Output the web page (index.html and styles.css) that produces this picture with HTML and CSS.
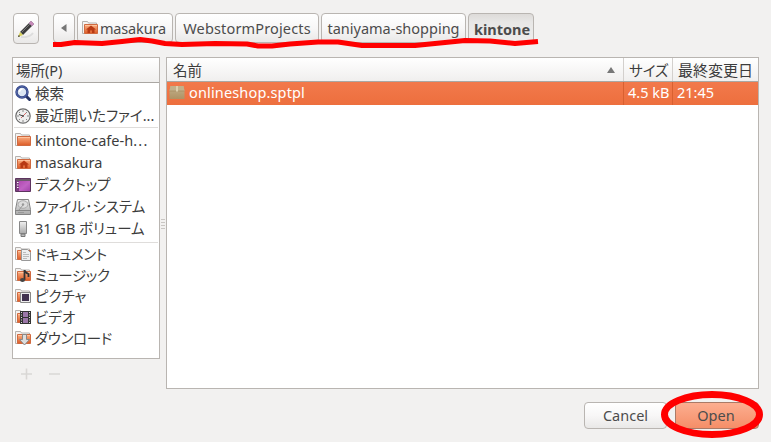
FILE: index.html
```html
<!DOCTYPE html>
<html lang="ja">
<head>
<meta charset="utf-8">
<title>Open</title>
<link rel="stylesheet" href="styles.css">
</head>
<body>
<svg class="defs" width="0" height="0" aria-hidden="true">
  <defs>
    <linearGradient id="orange" x1="0" y1="0" x2="0" y2="1"><stop offset="0" stop-color="#fbb184"/><stop offset="1" stop-color="#dc5b26"/></linearGradient>
    <linearGradient id="silver" x1="0" y1="0" x2="0" y2="1"><stop offset="0" stop-color="#f1f1f1"/><stop offset="1" stop-color="#aaa"/></linearGradient>
    <linearGradient id="violet" x1="0" y1="0" x2="1" y2="1"><stop offset="0" stop-color="#a83aa8"/><stop offset=".6" stop-color="#c063c4"/><stop offset="1" stop-color="#a040a8"/></linearGradient>
    <linearGradient id="box" x1="0" y1="0" x2="0" y2="1"><stop offset="0" stop-color="#c4b28c"/><stop offset="1" stop-color="#ae9264"/></linearGradient>
    <symbol id="folder" viewBox="0 0 16 16">
      <path d="M.5 13.500V1.500h5l1 1.500h8v10.500z" fill="#f5f3f1" stroke="#b5b1ae"/>
      <path d="M2.500 4.500h13v9h-13z" fill="url(#orange)" stroke="#d06a40"/>
      <path d="M3 5.500h12" stroke="#ffc39d"/>
    </symbol>
    <symbol id="home" viewBox="0 0 16 16"><use href="#folder"/><path d="M9 5.500l5 4h-1.500v3.500h-2.500v-2.500H8V13H5.500V9.500H4z" fill="#b83a14"/></symbol>
  </defs>
</svg>
<main class="dialog">
  <header class="pathbar">
    <button class="btn edit" aria-label="edit">
      <svg width="18" height="18" viewBox="0 0 18 18"><path d="M4 17q8 1 12-4" stroke="#ddd" stroke-width="2" fill="none"/><path d="M3 12l9-9 3 3-9 9z" fill="#3c3c3c"/><path d="M4.500 12.500l9-9" stroke="#777"/><path d="M12 3l2-2 3 3-2 2z" fill="#c98bbb" stroke="#9b6e94" stroke-width=".6"/><path d="M3 12l-2 5 5-2z" fill="#d8d25a"/><path d="M1 17l.8-2 1.300 1.200z" fill="#222"/></svg>
    </button>
    <nav class="crumbs">
      <button class="btn back" aria-label="back"><svg width="6" height="8" viewBox="0 0 6 8"><path d="M5.500 0v8L0 4z" fill="#777"/></svg></button>
      <button class="btn c1"><svg width="16" height="16"><use href="#home"/></svg><span class="t-masakura">masakura</span></button>
      <button class="btn c2"><span class="t-web">WebstormProjects</span></button>
      <button class="btn c3"><span class="t-tani">taniyama-shopping</span></button>
      <button class="btn c4"><span class="t-kin">kintone</span></button>
    </nav>
    <svg class="mark line" width="490" height="16" viewBox="52 34 490 16"><path d="M53 44.500h8L75 42.500 102 43.500 122 41.500 140 39.500 152 41 165 43.500 182 44.500 215 43.500 247 44 258 46 272 46 290 44 318 42 338 42 362 45.500 415 45.500 440 43 465 40.500 490 41 515 43.500 538 41.500" fill="none" stroke="red" stroke-width="5" stroke-linejoin="round"/></svg>
  </header>

  <section class="panes">
    <aside class="side">
      <div class="places">
        <div class="head"><span class="t-place">場所(P)</span></div>
        <ul>
          <li class="r23"><svg width="16" height="16" viewBox="0 0 16 16"><path d="M11 11l3.500 3.500" stroke="#263465" stroke-width="3" stroke-linecap="round"/><circle cx="7" cy="7" r="5.500" fill="#dce6f3" stroke="#2f4186" stroke-width="2.400"/><circle cx="7" cy="7" r="5.500" fill="none" stroke="#6f84bd" stroke-width=".6"/><path d="M4.500 7a3 3 0 0 1 3-3" stroke="#fff" stroke-width="1.500" fill="none"/></svg><span class="p1">検索</span></li>
          <li class="r22"><svg width="16" height="16" viewBox="0 0 16 16"><circle cx="8" cy="8" r="7.200" fill="#eee" stroke="#6b6b6b" stroke-width="1.200"/><path d="M8 2v2M8 12v2M2 8h2M12 8h2M4 4l1 1M12 4l-1 1M4 12l1-1M12 12l-1-1" stroke="#888"/><path d="M8 8L4 6.500" stroke="#444"/><path d="M6 10l5-5" stroke="#d66"/><circle cx="8" cy="8" r="1" fill="#555"/></svg><span class="p2">最近開いたファイ...</span></li>
          <li class="sep"></li>
          <li class="r23"><svg width="16" height="16"><use href="#folder"/></svg><span class="p3">kintone-cafe-h<span class="dots">...</span></span></li>
          <li class="r22"><svg width="16" height="16"><use href="#home"/></svg><span class="t-masakura">masakura</span></li>
          <li class="r22"><svg width="16" height="16" viewBox="0 0 16 16"><path d="M.5 1.500h15v13H.5z" fill="url(#violet)" stroke="#5d345f"/><path d="M1 2h14v2H1z" fill="#6d5a6c"/><path d="M1 4h3v10H1z" fill="#7d3f80"/><path d="M2 5.500h1.500M2 8h1.500M2 10.500h1.500" stroke="#fff" stroke-width="1.200"/></svg><span class="p5">デスクトップ</span></li>
          <li class="r22"><svg width="16" height="16" viewBox="0 0 16 16"><path d="M2.500.5h11l2 10v5H.5v-5z" fill="url(#silver)" stroke="#858585"/><ellipse cx="8" cy="5.500" rx="5" ry="3.800" fill="#ddd" stroke="#aaa"/><circle cx="8" cy="5.500" r="1.200" fill="#999"/><path d="M8 6l-4 5" stroke="#999"/><path d="M1 11.500h14" stroke="#888"/><path d="M3 13.500h6" stroke="#999"/></svg><span class="p6">ファイル･システム</span></li>
          <li class="r22"><svg width="16" height="16" viewBox="0 0 16 16"><path d="M4.500.5h7v12h-7z" fill="url(#silver)" stroke="#888"/><path d="M6 13h4v2.500H6z" fill="#bbb" stroke="#777"/></svg><span class="p7">31 GB ボリューム</span></li>
          <li class="sep s2"></li>
          <li class="r21"><svg width="16" height="16" viewBox="0 0 16 16"><use href="#folder"/><path d="M6.500 3.500h6l3 3v8h-9z" fill="#eee" stroke="#999"/><path d="M8 6.500h3M8 8.500h6M8 10.500h6M8 12.500h4" stroke="#bbb"/></svg><span class="p8">ドキュメント</span></li>
          <li class="r21"><svg width="16" height="16" viewBox="0 0 16 16"><use href="#folder"/><path d="M9.500 13V3q0 2 4 4v3" fill="none" stroke="#333" stroke-width="1.800"/><ellipse cx="7.500" cy="13" rx="2.500" ry="2" fill="#444"/></svg><span class="p9">ミュージック</span></li>
          <li class="r21"><svg width="16" height="16" viewBox="0 0 16 16"><use href="#folder"/><path d="M5.500 4.500h10v10h-10z" fill="#eee" stroke="#888"/><path d="M7 6h7v7H7z" fill="#41324f"/></svg><span class="p10">ピクチャ</span></li>
          <li class="r21"><svg width="16" height="16" viewBox="0 0 16 16"><use href="#folder"/><path d="M5 2h11v13H5z" fill="#333"/><path d="M8 3h5v5H8zM8 9h5v5H8z" fill="#9b77a8"/><path d="M6.500 3v11M14.500 3v11" stroke="#ddd" stroke-width="1" stroke-dasharray="1 1.500"/></svg><span class="p11">ビデオ</span></li>
          <li class="r21"><svg width="16" height="16" viewBox="0 0 16 16"><use href="#folder"/><path d="M7.500 4.500h4v5h3l-5 5.500-5-5.500h3z" fill="#ddd" stroke="#888"/></svg><span class="p12">ダウンロード</span></li>
        </ul>
      </div>
      <div class="tools"><svg width="40" height="12" viewBox="0 0 40 12"><path d="M0 6h11M5.500 .5v11M28 6h11" stroke="#d9d7d5" stroke-width="1.600"/></svg></div>
    </aside>
    <div class="grip"><i></i><i></i><i></i><i></i></div>
    <section class="files">
      <div class="grid head">
        <div class="name"><span class="h1">名前</span><svg width="8" height="6" viewBox="0 0 8 6"><path d="M4 0l4 6H0z" fill="#777"/></svg></div>
        <div class="size"><span class="h2">サイズ</span></div>
        <div class="date"><span class="h3">最終変更日</span></div>
      </div>
      <div class="grid row">
        <div class="name"><svg width="16" height="16" viewBox="0 0 16 16"><path d="M1.500 1h13l1 5v8H.5V6z" fill="url(#box)"/><path d="M1.500 1h13l1 5H.5z" fill="#c3b18b"/><path d="M.5 6h15" stroke="#a68d62" stroke-width=".8"/><path d="M7 1h2v5.500H7z" fill="#ddd0ae"/></svg><span class="f1">onlineshop.sptpl</span></div>
        <div class="size"><span class="f2">4.5 kB</span></div>
        <div class="date"><span class="f3">21:45</span></div>
      </div>
    </section>
  </section>

  <footer class="actions">
    <button class="btn cancel"><span class="t-cancel">Cancel</span></button>
    <button class="btn open"><span class="t-open">Open</span></button>
    <svg class="mark ring" width="104" height="50" viewBox="0 0 104 50"><ellipse cx="52" cy="24.500" rx="47.500" ry="20" fill="none" stroke="red" stroke-width="7"/></svg>
  </footer>
</main>
</body>
</html>
```
FILE: styles.css
```css
* { box-sizing: border-box; }
body { margin: 0; background: #f2f1f0; color: #3c3c3c; font: 14.5px/20px "Noto Sans", "Noto Sans CJK JP", sans-serif; }
.defs { position: absolute; }
.dialog { width: 771px; height: 442px; padding: 13px 12px 0 12px; overflow: hidden; display: flex; flex-direction: column; }
svg { flex: none; display: block; }
span { white-space: nowrap; }
.btn { font: inherit; color: #4c4c4c; margin: 0; padding: 0; border: 1px solid #b9b5b1; border-radius: 4px; background: linear-gradient(#fff, #f8f7f7 50%, #e9e8e7); display: flex; align-items: center; justify-content: center; flex: none; }
.pathbar { position: relative; display: flex; height: 31px; gap: 15px; margin-bottom: 13px; padding-left: 1px; }
.edit { width: 26px; height: 31px; }
.crumbs { display: flex; gap: 2px; margin-left: -1px; }
.crumbs .btn { height: 30px; }
.back { width: 22px; }
.c1 { width: 96px; gap: 2px; }
.c1 .t-masakura { letter-spacing: -0.15px; margin-right: 2px; }
.c2 { width: 144px; }
.c2 span { letter-spacing: 0.15px; }
.c3 { width: 145px; }
.crumbs .c4 { width: 66px; background: linear-gradient(#dddbd9, #e8e7e6 30%, #eeedec); font-weight: 700; padding: 2px 0 0 2px; }
.mark { position: absolute; pointer-events: none; }
.line { left: 40px; top: 21px; }
.panes { display: flex; height: 332px; }
.side { width: 148px; }
.places { height: 302px; border: 1px solid #b9b5b1; background: #fff; }
.head { background: linear-gradient(#fff, #f0efee); border-bottom: 1px solid #aaa7a3; }
.side .head { height: 25px; padding: 2px 0 0 3px; }
ul { list-style: none; margin: -1px 0 0; padding: 0; font-feature-settings: "palt"; }
li { display: flex; align-items: center; padding-left: 2px; gap: 4px; }
li > span { position: relative; top: -1px; }
li > svg { margin-bottom: 1px; }
.r23 { height: 23px; }
.r22 { height: 22px; }
.r21 { height: 21px; }
.p8, .p9, .p12 { letter-spacing: -0.4px; }
.sep { height: 1px; margin: 0 1px 1px; background: #dfdddb; }
.s2 { margin: 2px 1px 1px; }
.dots { letter-spacing: 1.3px; }
.tools { padding: 9px 0 0 9px; }
.grip { width: 6px; padding: 162px 0 0 1px; display: flex; flex-direction: column; gap: 2px; }
.grip i { width: 4px; height: 1px; background: #c9c6c3; }
.files { width: 593px; border: 1px solid #b9b5b1; background: #fff; }
.grid { display: grid; grid-template-columns: 457px 49px 1fr; height: 24px; }
.grid > div { display: flex; align-items: center; border-right: 1px solid #d3d0cd; }
.grid > .date { border: 0; }
.head .name { justify-content: space-between; padding: 0 8px 0 6px; }
.head .size { padding-left: 5px; font-feature-settings: "palt"; }
.head .date { padding-left: 5px; font-size: 15px; }
.grid.row { height: 23px; background: linear-gradient(#f2794b, #ed6f3e); color: #fff; }
.grid.row > div { border-color: #d96030; padding-bottom: 3px; }
.grid.row .name svg { margin-top: 1px; }
.row .name { padding-left: 2px; gap: 4px; }
.f1 { letter-spacing: 0.15px; }
.row .size { padding-left: 4px; }
.row .date { padding-left: 4px; }
.actions { position: relative; display: flex; gap: 8px; justify-content: flex-end; margin-top: 13px; height: 27px; }
.actions .btn { height: 27px; padding-bottom: 1px; }
.cancel { width: 83px; }
.open { width: 84px; background: linear-gradient(#fcae90, #f58e68); border-color: #aa7a66; }
.t-open { margin-right: 2px; }
.ring { left: 648px; top: -12px; }
```
